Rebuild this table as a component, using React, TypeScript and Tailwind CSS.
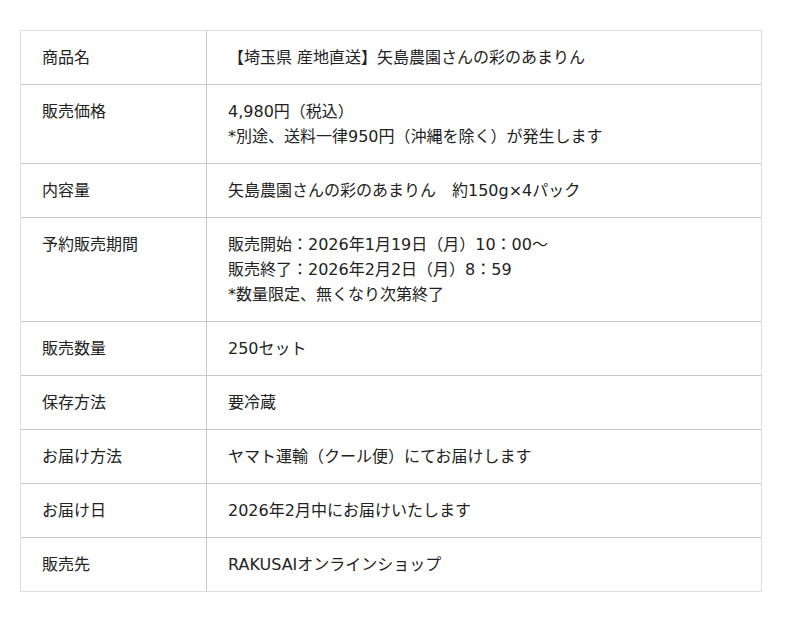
import React from "react";

const rows: { label: string; lines: string[] }[] = [
  { label: "商品名", lines: ["【埼玉県 産地直送】矢島農園さんの彩のあまりん"] },
  { label: "販売価格", lines: ["4,980円（税込）", "*別途、送料一律950円（沖縄を除く）が発生します"] },
  { label: "内容量", lines: ["矢島農園さんの彩のあまりん　約150g×4パック"] },
  {
    label: "予約販売期間",
    lines: [
      "販売開始：2026年1月19日（月）10：00～",
      "販売終了：2026年2月2日（月）8：59",
      "*数量限定、無くなり次第終了",
    ],
  },
  { label: "販売数量", lines: ["250セット"] },
  { label: "保存方法", lines: ["要冷蔵"] },
  { label: "お届け方法", lines: ["ヤマト運輸（クール便）にてお届けします"] },
  { label: "お届け日", lines: ["2026年2月中にお届けいたします"] },
  { label: "販売先", lines: ["RAKUSAIオンラインショップ"] },
];

export default function App() {
  return (
    <div
      className="w-[800px] h-[622px] bg-white pt-[30px] pl-[20px] text-[#222] text-[16px] leading-[25px]"
      style={{ fontFamily: '"DejaVu Sans", "Noto Sans CJK JP", sans-serif' }}
    >
      <div className="w-[742px] border border-[#dedede]">
        {rows.map((r, i) => (
          <div
            key={i}
            className={`flex ${i < rows.length - 1 ? "border-b border-[#c8c8c8]" : ""}`}
          >
            <div className="w-[186px] shrink-0 border-r border-[#c8c8c8] pl-[21px] pt-[14px] pb-[14px]">
              {r.label}
            </div>
            <div className="flex-1 pl-[21px] pt-[14px] pb-[14px]">
              {r.lines.map((l, j) => (
                <div key={j}>{l}</div>
              ))}
            </div>
          </div>
        ))}
      </div>
    </div>
  );
}
